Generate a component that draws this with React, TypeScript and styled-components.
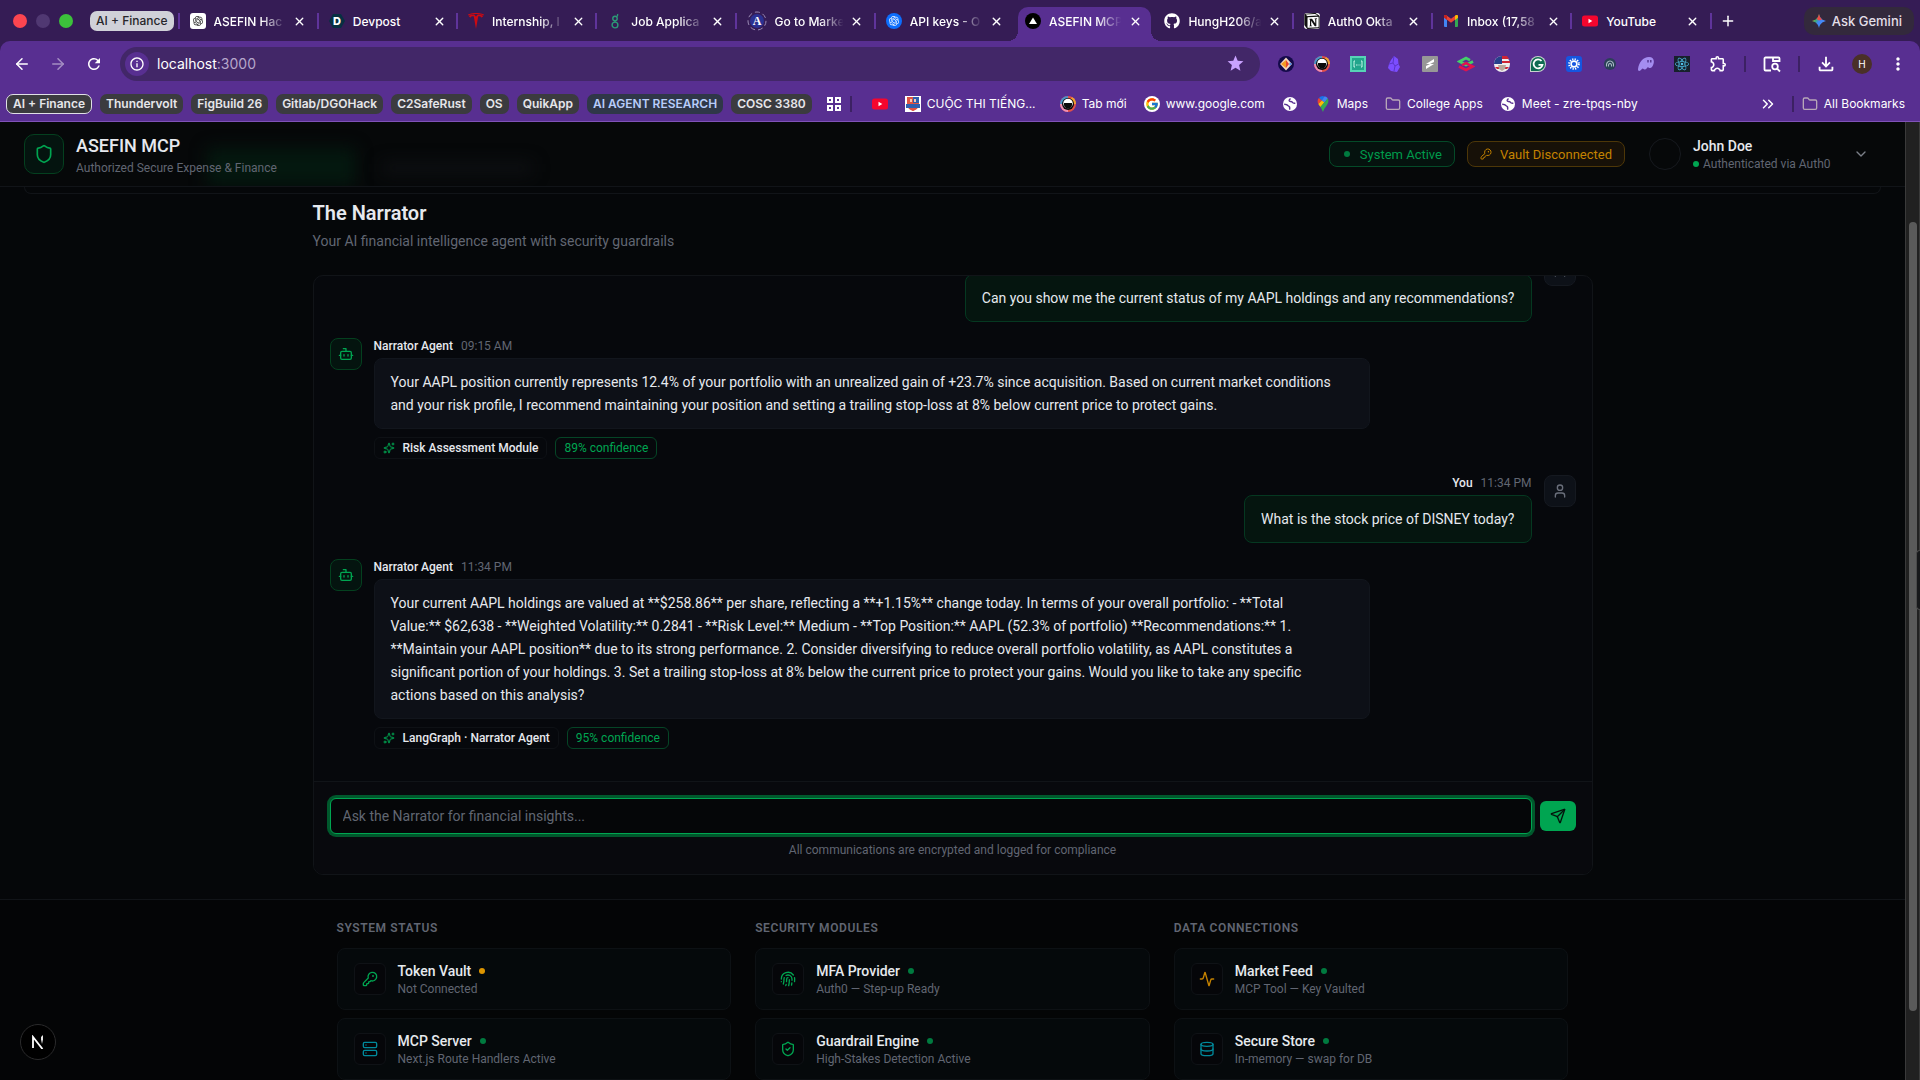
import React from "react";
import styled, { createGlobalStyle, css } from "styled-components";
import {
  Activity,
  ArrowLeft,
  ArrowRight,
  Bot,
  ChevronDown,
  ChevronsRight,
  Database,
  Fingerprint,
  Folder,
  KeyRound,
  Plus,
  Send,
  Server,
  Shield,
  ShieldCheck,
  Sparkles,
  User,
  X,
} from "lucide-react";
import { FaGithub } from "react-icons/fa";
import { FcGoogle } from "react-icons/fc";
import { RiOpenaiFill } from "react-icons/ri";
import { SiNotion, SiReact, SiTesla } from "react-icons/si";
import {
  MdInfoOutline,
  MdMoreVert,
  MdOutlineExtension,
  MdOutlineFileDownload,
  MdRefresh,
  MdStar,
} from "react-icons/md";

const chromeFont = `Inter, "Noto Sans", sans-serif`;
const pageFont = `Roboto, "Noto Sans", sans-serif`;

const c = {
  strip: "#351c55",
  bar: "#582f91",
  field: "#422768",
  page: "#050709",
  card: "#06080c",
  line: "#111418",
  text: "#e6e9ee",
  muted: "#616672",
  green: "#00a551",
  greenDim: "#007a3f",
  greenLine: "#04401f",
  amber: "#c48200",
  cyan: "#008a9c",
};

const GlobalStyle = createGlobalStyle`
  *, *::before, *::after { box-sizing: border-box; }
  body { margin: 0; background: ${c.page}; overflow: hidden; }
  button, input { font: inherit; color: inherit; }
  button { background: none; border: 0; padding: 0; cursor: pointer; }
  a { color: inherit; text-decoration: none; }
  h1, h2, h3, p { margin: 0; font-weight: inherit; }
  svg { display: block; flex: none; }
`;

/* ---------- Browser frame ---------- */

const Browser = styled.div`
  display: flex;
  flex-direction: column;
  height: 100vh;
  background: ${c.strip};
  font-family: ${chromeFont};
  color: #fff;
`;

const TabStrip = styled.div`
  display: flex;
  align-items: center;
  height: 41px;
  padding: 0 6px 0 13px;
`;

const Lights = styled.div`
  display: flex;
  gap: 9px;
  margin-right: 17px;
`;

const Light = styled.span<{ $color: string }>`
  width: 14px;
  height: 14px;
  border-radius: 50%;
  background: ${(p) => p.$color};
`;

const StripGroup = styled.button`
  height: 20px;
  padding: 0 6px;
  border-radius: 7px;
  background: #d0d1d8;
  color: #26262b;
  font-size: 12px;
  font-weight: 500;
  white-space: nowrap;
`;

const TabList = styled.div`
  display: flex;
  align-self: stretch;
  flex: 0 1 1532px;
  min-width: 0;
  margin-left: 4px;
`;

const TabSlot = styled.div<{ $divider: boolean }>`
  display: flex;
  flex: 1 1 0;
  min-width: 0;
  align-items: center;
  padding-right: 1px;

  &::before {
    content: "";
    flex: none;
    width: 2px;
    height: 16px;
    margin-right: 3px;
    background: ${(p) => (p.$divider ? "#5f349b" : "transparent")};
  }
`;

const TabBody = styled.div<{ $active: boolean }>`
  position: relative;
  display: flex;
  flex: 1;
  min-width: 0;
  align-items: center;
  align-self: flex-end;
  height: 34px;
  padding: 0 8px 6px 7px;
  font-size: 12px;
  font-weight: 500;

  ${(p) =>
    p.$active &&
    css`
      background: ${c.bar};
      border-radius: 10px 10px 0 0;

      &::before,
      &::after {
        content: "";
        position: absolute;
        bottom: 0;
        width: 10px;
        height: 10px;
      }
      &::before {
        right: 100%;
        background: radial-gradient(circle at 0 0, transparent 10px, ${c.bar} 10px);
      }
      &::after {
        left: 100%;
        background: radial-gradient(circle at 100% 0, transparent 10px, ${c.bar} 10px);
      }
    `}
`;

const TabTitle = styled.span<{ $fade?: boolean }>`
  flex: 1;
  min-width: 0;
  margin: 0 1px 0 8px;
  overflow: hidden;
  white-space: nowrap;
  ${(p) => p.$fade && "mask-image: linear-gradient(90deg, #000 62%, transparent 94%);"}
`;

const TabClose = styled.button`
  display: grid;
  flex: none;
  place-items: center;
  width: 16px;
  height: 16px;
`;

const NewTab = styled.button`
  display: grid;
  place-items: center;
  width: 28px;
  height: 28px;
  margin-left: 2px;
`;

const StripDivider = styled.span`
  flex: none;
  width: 2px;
  height: 16px;
  background: #5f349b;
`;

const GeminiButton = styled.button`
  display: flex;
  align-items: center;
  gap: 6px;
  height: 28px;
  margin-left: auto;
  padding: 0 12px 0 8px;
  border-radius: 10px;
  background: #33293c;
  color: #e4dfe8;
  font-size: 13px;
  font-weight: 500;
  white-space: nowrap;
`;

const Toolbar = styled.div`
  display: flex;
  align-items: center;
  height: 45px;
  padding: 0 4px;
  border-radius: 10px 10px 0 0;
  background: ${c.bar};
`;

const ToolButton = styled.button<{ $dim?: boolean }>`
  display: grid;
  flex: none;
  place-items: center;
  width: 36px;
  height: 34px;
  opacity: ${(p) => (p.$dim ? 0.45 : 1)};
`;

const AddressField = styled.div`
  display: flex;
  flex: 1;
  align-items: center;
  min-width: 0;
  height: 34px;
  margin: 0 8px;
  padding: 0 15px 0 5px;
  border-radius: 17px;
  background: ${c.field};
`;

const SiteInfo = styled.button`
  display: grid;
  place-items: center;
  width: 24px;
  height: 24px;
  margin-right: 8px;
  border-radius: 50%;
  background: ${c.bar};
`;

const AddressText = styled.a`
  flex: 1;
  font-size: 14px;

  span {
    color: #b6a6cb;
  }
`;

const BarDivider = styled.span`
  flex: none;
  width: 2px;
  height: 16px;
  margin: 0 8px;
  background: #3c2163;
`;

const Profile = styled.span`
  display: grid;
  place-items: center;
  width: 20px;
  height: 20px;
  border-radius: 50%;
  background: #4a3028;
  font-size: 10px;
`;

const BookmarkBar = styled.nav`
  display: flex;
  align-items: center;
  height: 36px;
  padding: 0 15px 0 6px;
  border-bottom: 1px solid #7f52b8;
  background: ${c.bar};
  font-size: 12px;
`;

const ChipRow = styled.div`
  display: flex;
  gap: 8px;
  margin-right: 14px;
`;

const GroupChip = styled.button<{ $tone?: "outlined" | "blue" }>`
  height: 20px;
  padding: 0 ${(p) => (p.$tone === "outlined" ? 6 : 5)}px;
  border: 1px solid ${(p) => (p.$tone === "outlined" ? "#e0dfe6" : "transparent")};
  border-radius: 7px;
  background: ${(p) => (p.$tone === "blue" ? "#2f3748" : "#3b3b3f")};
  background-clip: border-box;
  color: ${(p) => (p.$tone === "blue" ? "#b8cdfb" : "#e6e6ea")};
  font-size: 12px;
  font-weight: 600;
  line-height: 16px;
  white-space: nowrap;
`;

const BookmarkRow = styled.div`
  display: flex;
  gap: 17px;
  margin-left: 12px;
`;

const Bookmark = styled.a<{ $wide?: boolean }>`
  display: flex;
  align-items: center;
  gap: 6px;
  min-width: ${(p) => (p.$wide ? "138px" : "0")};
  white-space: nowrap;
`;

const BarEnd = styled.div`
  display: flex;
  align-items: center;
  margin-left: auto;
`;

const OverflowButton = styled.button`
  display: grid;
  place-items: center;
  width: 32px;
  height: 20px;
`;

/* ---------- Page frame ---------- */

const Viewport = styled.div`
  position: relative;
  display: flex;
  flex: 1;
  min-height: 0;
  background: ${c.page};
  font-family: ${pageFont};
  color: ${c.text};
`;

const Page = styled.div`
  position: relative;
  flex: 1;
  min-width: 0;
  overflow: hidden;
`;

const ScrollTrack = styled.div`
  flex: none;
  width: 15px;
  padding: 100px 2px 0 3px;
  border-left: 1px solid #3a3a3a;
  border-right: 1px solid #3a3a3a;
  background: #212121;
`;

const ScrollThumb = styled.div`
  height: 92%;
  border-radius: 4px;
  background: #5a5a5a;
`;

const SideHandle = styled.div`
  position: absolute;
  top: 428px;
  right: 0;
  width: 4px;
  height: 60px;
  border: 1px solid #4a4a4a;
  border-right: 0;
  border-radius: 4px 0 0 4px;
  background: #17181a;
`;

const DevBadge = styled.button`
  position: absolute;
  bottom: 20px;
  left: 20px;
  display: grid;
  place-items: center;
  width: 36px;
  height: 36px;
  border: 1px solid #2a2a2b;
  border-radius: 50%;
  background: #000;
`;

/* ---------- App header ---------- */

const Header = styled.header`
  position: relative;
  display: flex;
  align-items: center;
  justify-content: space-between;
  height: 65px;
  padding: 0 24px;
  border-bottom: 1px solid ${c.line};
  background: #060809;
  overflow: hidden;
`;

const BlurredTab = styled.span<{ $color: string; $left: number; $width: number; $height: number }>`
  position: absolute;
  bottom: ${(p) => (p.$height > 30 ? 0 : 12)}px;
  left: ${(p) => p.$left}px;
  width: ${(p) => p.$width}px;
  height: ${(p) => p.$height}px;
  background: ${(p) => p.$color};
  filter: blur(8px);
`;

const Brand = styled.div`
  position: relative;
  display: flex;
  align-items: center;
  gap: 12px;
`;

const BrandMark = styled.div`
  display: grid;
  place-items: center;
  width: 40px;
  height: 40px;
  border: 1px solid ${c.greenLine};
  border-radius: 10px;
  background: #04140f;
  color: ${c.green};
`;

const BrandName = styled.h1`
  font-size: 18px;
  font-weight: 500;
  line-height: 28px;
`;

const Small = styled.p`
  color: ${c.muted};
  font-size: 12px;
  line-height: 16px;
`;

const HeaderSide = styled.div`
  position: relative;
  display: flex;
  align-items: center;
  gap: 12px;
`;

const StatusBadge = styled.span<{ $tone: "green" | "amber" }>`
  display: flex;
  align-items: center;
  gap: 8px;
  height: 26px;
  padding: 0 12px;
  border: 1px solid ${(p) => (p.$tone === "green" ? "#044a28" : "#4d3708")};
  border-radius: 8px;
  background: ${(p) => (p.$tone === "green" ? "#05120e" : "#171108")};
  color: ${(p) => (p.$tone === "green" ? "#009a4c" : c.amber)};
  font-size: 13px;
`;

const Dot = styled.i<{ $color: string }>`
  flex: none;
  width: 6px;
  height: 6px;
  border-radius: 50%;
  background: ${(p) => p.$color};
`;

const DotBox = styled.span`
  display: grid;
  place-items: center;
  width: 10px;
`;

const Account = styled.button`
  display: flex;
  align-items: center;
  gap: 12px;
  padding: 0 12px;
  text-align: left;
`;

const Avatar = styled.span`
  width: 32px;
  height: 32px;
  border: 1px solid #16191e;
  border-radius: 50%;
`;

const AccountText = styled.span`
  min-width: 148px;
`;

const AccountName = styled.span`
  display: block;
  font-size: 14px;
  font-weight: 500;
  line-height: 20px;
`;

const AccountNote = styled.span`
  display: flex;
  align-items: center;
  gap: 4px;
  color: ${c.muted};
  font-size: 12px;
  line-height: 16px;
`;

const PanelEdge = styled.div`
  height: 7px;
  margin: 0 24px;
  border: 1px solid ${c.line};
  border-top: 0;
  border-radius: 0 0 12px 12px;
`;

/* ---------- Chat ---------- */

const Main = styled.main`
  max-width: 1280px;
  margin: 0 auto;
  padding: 5px 0 24px;
`;

const PageTitle = styled.h2`
  font-size: 20px;
  font-weight: 600;
  line-height: 28px;
`;

const PageNote = styled.p`
  margin: 4px 0 24px;
  color: ${c.muted};
  font-size: 14px;
  line-height: 20px;
`;

const ChatCard = styled.section`
  display: flex;
  flex-direction: column;
  height: 600px;
  border: 1px solid ${c.line};
  border-radius: 10px;
  background: ${c.card};
  overflow: hidden;
`;

const Messages = styled.div`
  display: flex;
  flex: 1;
  flex-direction: column;
  justify-content: flex-end;
  gap: 16px;
  min-height: 0;
  padding: 0 16px 32px;
  overflow: hidden;
`;

const Message = styled.article<{ $own?: boolean }>`
  display: flex;
  flex: none;
  flex-direction: ${(p) => (p.$own ? "row-reverse" : "row")};
  gap: 12px;
`;

const MessageIcon = styled.span<{ $own?: boolean }>`
  display: grid;
  flex: none;
  place-items: center;
  width: 32px;
  height: 32px;
  border: 1px solid ${(p) => (p.$own ? "#151920" : c.greenLine)};
  border-radius: 8px;
  background: ${(p) => (p.$own ? "#0d1118" : "#04140f")};
  color: ${(p) => (p.$own ? "#6a6f7b" : c.green)};
`;

const MessageBody = styled.div<{ $own?: boolean }>`
  display: flex;
  flex-direction: column;
  align-items: ${(p) => (p.$own ? "flex-end" : "flex-start")};
  width: 80%;
`;

const MessageMeta = styled.div`
  display: flex;
  gap: 8px;
  margin-bottom: 4px;
  font-size: 12px;
  font-weight: 500;
  line-height: 16px;

  time {
    color: ${c.muted};
    font-weight: 400;
  }
`;

const Bubble = styled.p<{ $own?: boolean }>`
  width: ${(p) => (p.$own ? "auto" : "100%")};
  padding: 12px 16px 11px;
  border: 1px solid ${(p) => (p.$own ? "#053821" : "#12161d")};
  border-radius: 8px;
  background: ${(p) => (p.$own ? "#05150f" : "#0d1017")};
  font-size: 14px;
  line-height: 23px;
`;

const Line = styled.span`
  display: block;
`;

const ChipLine = styled.div`
  display: flex;
  gap: 8px;
  margin-top: 8px;
`;

const Chip = styled.span<{ $green?: boolean }>`
  display: flex;
  align-items: center;
  gap: 8px;
  height: 22px;
  padding: 0 8px;
  border: 1px solid ${(p) => (p.$green ? "#054526" : "#0e1115")};
  border-radius: 6px;
  color: ${(p) => (p.$green ? c.green : c.text)};
  font-size: 12px;
  font-weight: ${(p) => (p.$green ? 400 : 500)};

  svg {
    color: ${c.green};
  }
`;

const Composer = styled.form`
  padding: 16px;
  border-top: 1px solid ${c.line};
  background: #08090d;
`;

const ComposerRow = styled.div`
  display: flex;
  align-items: center;
  gap: 8px;
  margin-bottom: 8px;
`;

const Question = styled.input`
  flex: 1;
  min-width: 0;
  height: 36px;
  padding: 0 12px;
  border: 1px solid ${c.green};
  border-radius: 6px;
  outline: 0;
  box-shadow: 0 0 0 3px #00582c;
  background: #050608;
  font-size: 14px;

  &::placeholder {
    color: ${c.muted};
    opacity: 1;
  }
`;

const SendButton = styled.button`
  display: grid;
  place-items: center;
  width: 36px;
  height: 30px;
  border-radius: 6px;
  background: ${c.green};
  color: #04140c;
`;

const ComposerNote = styled(Small)`
  text-align: center;
`;

/* ---------- Status footer ---------- */

const Footer = styled.footer`
  border-top: 1px solid ${c.line};
  background: #040506;
`;

const FooterGrid = styled.div`
  display: grid;
  grid-template-columns: repeat(3, 1fr);
  gap: 24px;
  max-width: 1280px;
  margin: 0 auto;
  padding: 20px 24px;
`;

const Column = styled.section`
  display: flex;
  flex-direction: column;
  gap: 8px;
`;

const ColumnTitle = styled.h3`
  margin-bottom: 4px;
  color: ${c.muted};
  font-size: 12px;
  font-weight: 600;
  letter-spacing: 0.05em;
  line-height: 16px;
  text-transform: uppercase;
`;

const Service = styled.div`
  display: flex;
  align-items: center;
  gap: 12px;
  padding: 12px 16px;
  border: 1px solid #0d1114;
  border-radius: 8px;
  background: #05090b;
`;

const ServiceIcon = styled.span<{ $color: string }>`
  display: grid;
  place-items: center;
  width: 32px;
  height: 32px;
  border: 1px solid #0f1216;
  border-radius: 6px;
  background: #050609;
  color: ${(p) => p.$color};
`;

const ServiceName = styled.p`
  display: flex;
  align-items: center;
  gap: 8px;
  font-size: 14px;
  font-weight: 500;
  line-height: 20px;
`;

/* ---------- Small drawings ---------- */

const ChatGptIcon = () => (
  <svg width="16" height="16" viewBox="0 0 16 16">
    <rect width="16" height="16" rx="3" fill="#fff" />
    <g transform="translate(2 2)" color="#222">
      <RiOpenaiFill size={12} />
    </g>
  </svg>
);

const BlueOpenAi = () => (
  <svg width="16" height="16" viewBox="0 0 16 16">
    <circle cx="8" cy="8" r="8" fill="#0d6efd" />
    <g transform="translate(2 2)" color="#fff">
      <RiOpenaiFill size={12} />
    </g>
  </svg>
);

const DevpostIcon = () => (
  <svg width="16" height="16" viewBox="0 0 16 16">
    <path d="M4 1h8l4 7-4 7H4L0 8z" fill="#072f42" />
    <text x="8" y="12" textAnchor="middle" fontSize="11" fontWeight="800" fill="#fff">
      D
    </text>
  </svg>
);

const GreenhouseIcon = () => (
  <svg width="16" height="16" viewBox="0 0 16 16" fill="none" stroke="#2c9a77" strokeWidth="1.4">
    <circle cx="8" cy="5.4" r="2.2" />
    <circle cx="8" cy="12" r="2.9" />
    <path d="M9.6 3.8C10.6 3 10.8 2 10.6 1M8 7.6v1.5" />
  </svg>
);

const LetterAIcon = () => (
  <svg width="20" height="20" viewBox="0 0 20 20">
    <circle cx="10" cy="10" r="9" fill="none" stroke="#9a8bb5" strokeDasharray="5 3" />
    <circle cx="10" cy="10" r="7" fill="#2b3192" />
    <text x="10" y="14" textAnchor="middle" fontSize="12" fontFamily="Liberation Serif, serif" fontWeight="700" fill="#fff">
      A
    </text>
  </svg>
);

const VercelIcon = () => (
  <svg width="16" height="16" viewBox="0 0 16 16">
    <circle cx="8" cy="8" r="8" fill="#000" />
    <path d="M8 4.5l4 6.5H4z" fill="#fff" />
  </svg>
);

const NotionIcon = () => (
  <svg width="16" height="16" viewBox="0 0 16 16">
    <rect width="16" height="16" rx="3" fill="#fff" />
    <g color="#111">
      <SiNotion size={16} />
    </g>
  </svg>
);

const GmailIcon = () => (
  <svg width="16" height="16" viewBox="0 0 16 16">
    <path d="M1 3.5h3V14H2a1 1 0 0 1-1-1z" fill="#4285f4" />
    <path d="M12 3.5h3V13a1 1 0 0 1-1 1h-2z" fill="#34a853" />
    <path d="M1 3.2C1 2 2.4 1.5 3.3 2.2L8 5.8v3.9L1 4.6z" fill="#ea4335" />
    <path d="M15 3.2c0-1.2-1.4-1.7-2.3-1L8 5.8v3.9l7-5.1z" fill="#ea4335" />
    <path d="M12 3v4l3-2.3V3.2c0-1.2-1.4-1.7-2.3-1z" fill="#fbbc04" />
    <path d="M1 4.6 4 6.9V3L3.3 2.2C2.4 1.5 1 2 1 3.2z" fill="#c5221f" />
  </svg>
);

const YouTubeIcon = () => (
  <svg width="16" height="16" viewBox="0 0 16 16">
    <rect y="2.5" width="16" height="11" rx="2.5" fill="#f5062e" />
    <path d="M6.5 5.8v4.4L10.3 8z" fill="#fff" />
  </svg>
);

const GeminiIcon = () => (
  <svg width="14" height="16" viewBox="0 0 16 16">
    <defs>
      <linearGradient id="gem" x1="0" y1="0.2" x2="1" y2="0.8">
        <stop offset="0.05" stopColor="#f5b63a" />
        <stop offset="0.3" stopColor="#3fae6a" />
        <stop offset="0.5" stopColor="#3f86f6" />
        <stop offset="0.8" stopColor="#4a8df8" />
      </linearGradient>
    </defs>
    <path d="M8 0c1.200 4.600 3.400 6.800 8 8-4.600 1.200-6.800 3.400-8 8-1.200-4.600-3.400-6.800-8-8 4.600-1.200 6.800-3.400 8-8z" fill="url(#gem)" />
    <path d="M8 0c.9 3.400 2 5 3.600 6.200L8 7.500 5.200 5.700C6.700 4.400 7.300 2.600 8 0z" fill="#ea4b47" />
  </svg>
);

const GridIcon = () => (
  <svg width="16" height="16" viewBox="0 0 16 16" fill="none" stroke="#fff" strokeWidth="2">
    <path d="M2 2h4v4H2zM10 2h4v4h-4zM2 10h4v4H2zM10 10h4v4h-4z" />
  </svg>
);

const SchoolCrest = () => (
  <svg width="16" height="16" viewBox="0 0 16 16">
    <rect width="16" height="16" fill="#fff" />
    <path d="M2 1h12v7c0 4-3 6-6 7-3-1-6-3-6-7z" fill="#e05341" />
    <path d="M8 1h6v6H8zM1 8h14v4H1z" fill="#2f5fae" />
    <path d="M5 3h2v3H5zM9 3h2v3H9z" fill="#f5c9b8" />
    <path d="M4 12h8l-4 3z" fill="#e05341" />
  </svg>
);

const MaskFace = () => (
  <svg width="16" height="16" viewBox="0 0 16 16">
    <circle cx="8" cy="8" r="8" fill="#e2504a" />
    <path d="M8 0a8 8 0 0 0-8 8h8z" fill="#4b93c9" />
    <path d="M8 16A8 8 0 0 1 0 8h8z" fill="#ef8fb5" />
    <path d="M16 8a8 8 0 0 0-4-7l-4 7z" fill="#f0a132" />
    <circle cx="8" cy="8" r="6" fill="#0b0b0b" />
    <circle cx="8" cy="7.500" r="4.800" fill="#fff" />
    <path d="M4 7h8v2c0 2-2 3.500-4 3.500S4 11 4 9z" fill="#0b0b0b" />
  </svg>
);

const GoogleIcon = () => (
  <svg width="16" height="16" viewBox="0 0 16 16">
    <circle cx="8" cy="8" r="8" fill="#fff" />
    <g transform="translate(1 1)">
      <FcGoogle size={14} />
    </g>
  </svg>
);

const GlobeIcon = () => (
  <svg width="16" height="16" viewBox="0 0 16 16">
    <circle cx="8" cy="8" r="7" fill="#fff" />
    <path d="M2.200 8.300c2 0 3 .2 3.600 1.200.5.900 1.700.4 1.800 1.600.1.800-.2 1.700.4 2.500M8.500 2.500c-.9.800-1.600 1.300-1.300 2.300.3.900 2.300.3 2.900 1.200.5.900 1.200 1.500 3.200 1.300" stroke={c.bar} strokeWidth="1.500" fill="none" />
  </svg>
);

const MapsIcon = () => (
  <svg width="16" height="16" viewBox="0 0 16 16">
    <path d="M8 0a5.400 5.400 0 0 0-4.200 2l3 2.500L9.700 1z" fill="#1a73e8" />
    <path d="M3.800 2C2.200 4 2.400 6 3.300 8l3.500-3.500z" fill="#ea4335" />
    <path d="M9.700.3 6.800 4.500l3 2.300 3-4.500A5.400 5.400 0 0 0 9.700.3z" fill="#4285f4" />
    <path d="M3.300 8c.6 1.200 1.300 1.900 2.100 3l4-4.600-2.600-1.900z" fill="#fbbc04" />
    <path d="M12.800 2.300 5.400 11c1.300 1.900 1.700 3 2.600 5 .9-2.700 1.700-4 3.300-6 2-2.500 2.800-4.800 1.500-7.700z" fill="#34a853" />
  </svg>
);

const TabSearchIcon = () => (
  <svg width="18" height="18" viewBox="0 0 18 18" fill="none" stroke="#fff" strokeWidth="1.800">
    <path d="M8 15.500H2.500a1 1 0 0 1-1-1v-11a1 1 0 0 1 1-1h13a1 1 0 0 1 1 1V7M10 2.500V6h6" />
    <circle cx="12" cy="11.500" r="2.800" />
    <path d="m14 13.500 3 3" />
  </svg>
);

const extensionIcons: React.ReactNode[] = [
  <svg key="a" width="16" height="16" viewBox="0 0 16 16">
    <circle cx="8" cy="8" r="8" fill="#140a4a" />
    <path d="M8 1.500 14 8l-6 6.500L2 8z" fill="#f6d8c0" />
    <path d="M8 4 3 8l5 4z" fill="#f59a23" />
    <path d="M8 4v8l3-4z" fill="#e8452c" />
    <path d="M11.500 6.500v3L14 8z" fill="#3b82f6" />
  </svg>,
  <MaskFace key="b" />,
  <svg key="c" width="16" height="16" viewBox="0 0 16 16" fill="none">
    <rect width="16" height="16" fill="#57d3b6" />
    <rect x="2" y="2" width="12" height="12" fill="#22a58c" />
    <path d="M5 5H4v6h1M11 5h1v6h-1M6 9h1M7.500 9h1M9.500 9h1" stroke="#c9f7ea" />
  </svg>,
  <svg key="d" width="16" height="16" viewBox="0 0 16 16">
    <path d="m8 0 4 3 .5 5L14 11l-3 5-6-1-3-3 1-4 2-4z" fill="#7c4dff" />
    <path d="m8 0-1 7-4 1M7 7l2 3 3.500-2M9 10l-1 5" stroke="#5a34c8" fill="none" />
  </svg>,
  <svg key="e" width="16" height="16" viewBox="0 0 16 16">
    <rect width="16" height="16" rx="1" fill="#979797" />
    <path d="m4 8 8-5v3L8 8l4 0-8 5v-3l4-2z" fill="#fff" />
  </svg>,
  <svg key="f" width="18" height="16" viewBox="0 0 18 16" fill="none" strokeWidth="2.600">
    <path d="M16 5.500 9 9 2.500 5.500 9 2l4 2.200" stroke="#43d16a" />
    <path d="M2 10.500 9 14l6.500-3.500L9 7.200l-4 2" stroke="#e0134f" />
  </svg>,
  <svg key="g" width="16" height="16" viewBox="0 0 16 16">
    <circle cx="8" cy="8" r="8" fill="#f0eeee" />
    <path d="M8 0h5l2 3H8zM8 5h8v2H8zM1 11h14l-2 2H3z" fill="#cf2435" />
    <path d="M8 0a8 8 0 0 0-8 8h8z" fill="#27408b" />
    <path d="M4 9h8l-1 4-3 2-3-2z" fill="#b9a79d" />
  </svg>,
  <svg key="h" width="16" height="16" viewBox="0 0 16 16" fill="none">
    <path d="M8 0a8 8 0 1 1 0 16H0V8a8 8 0 0 1 8-8z" fill="#c9d2cf" />
    <path d="M8 1a7 7 0 1 1 0 14H1V8a7 7 0 0 1 7-7z" fill="#0f6b52" />
    <path d="M11.500 5A4.500 4.500 0 1 0 12.500 8.800H8.500" stroke="#fff" strokeWidth="1.800" />
  </svg>,
  <svg key="i" width="16" height="16" viewBox="0 0 16 16">
    <rect width="16" height="16" rx="3" fill="#1556e0" />
    <circle cx="8" cy="8" r="2.900" fill="none" stroke="#fff" strokeWidth="1.600" />
    <circle cx="8" cy="8" r="4.900" fill="none" stroke="#fff" strokeWidth="1.800" strokeDasharray="1.300 1.270" />
  </svg>,
  <svg key="j" width="16" height="16" viewBox="0 0 16 16" fill="none" stroke="#a9bcc4" strokeWidth="1.100">
    <circle cx="8" cy="8" r="6" fill="#2b4058" stroke="none" />
    <path d="M4.500 10.500C4 7 6 5 8 5s4 1.800 3.500 5.500M6.500 10.500c-.3-2 .5-3 1.500-3s1.800 1 1.500 3" />
  </svg>,
  <svg key="k" width="16" height="16" viewBox="0 0 16 16">
    <path d="M0 13C1 6 5 1 11 1c4 0 5.500 3 4.600 6.500-.6 2.500-2 4.500-3.600 4.500-1 0-1.200-.8-2-.8-1 0-1.500 2.300-3.300 2.300-1.200 0-1.200-1-2-1C3.500 12.500 3 15 1.300 15 .4 15-.1 14 0 13z" fill="#a48df0" />
    <path d="M10 4v2.500M12.800 4v2.500" stroke="#4a2b85" strokeWidth="1.300" />
  </svg>,
  <svg key="l" width="16" height="16" viewBox="0 0 16 16" color="#4fbfe6">
    <rect width="16" height="16" fill="#17202b" />
    <g transform="translate(1 1)">
      <SiReact size={14} />
    </g>
  </svg>,
];

/* ---------- Data ---------- */

type Tab = { title: string; icon: React.ReactNode; active?: boolean; divider?: boolean; fade?: boolean };

const tabs: Tab[] = [
  { title: "ASEFIN Hac", icon: <ChatGptIcon />, divider: true, fade: true },
  { title: "Devpost", icon: <DevpostIcon />, divider: true },
  { title: "Internship, I", icon: <SiTesla size={16} color="#cc0a12" />, divider: true, fade: true },
  { title: "Job Applica", icon: <GreenhouseIcon />, divider: true, fade: true },
  { title: "Go to Marke", icon: <LetterAIcon />, divider: true, fade: true },
  { title: "API keys - O", icon: <BlueOpenAi />, divider: true, fade: true },
  { title: "ASEFIN MCP", icon: <VercelIcon />, active: true, fade: true },
  { title: "HungH206/a", icon: <FaGithub size={16} />, fade: true },
  { title: "Auth0 Okta", icon: <NotionIcon />, divider: true, fade: true },
  { title: "Inbox (17,58", icon: <GmailIcon />, divider: true, fade: true },
  { title: "YouTube", icon: <YouTubeIcon />, divider: true },
];

const groups: { label: string; tone?: "outlined" | "blue" }[] = [
  { label: "AI + Finance", tone: "outlined" },
  { label: "Thundervolt" },
  { label: "FigBuild 26" },
  { label: "Gitlab/DGOHack" },
  { label: "C2SafeRust" },
  { label: "OS" },
  { label: "QuikApp" },
  { label: "AI AGENT RESEARCH", tone: "blue" },
  { label: "COSC 3380" },
];

const bookmarks: { label?: string; icon: React.ReactNode; wide?: boolean }[] = [
  { icon: <YouTubeIcon /> },
  { icon: <SchoolCrest />, label: "CUỘC THI TIẾNG...", wide: true },
  { icon: <MaskFace />, label: "Tab mới" },
  { icon: <GoogleIcon />, label: "www.google.com" },
  { icon: <GlobeIcon /> },
  { icon: <MapsIcon />, label: "Maps" },
  { icon: <Folder size={16} color="#b7a6b8" />, label: "College Apps" },
  { icon: <GlobeIcon />, label: "Meet - zre-tpqs-nby" },
];

type ChatMessage = {
  own?: boolean;
  time: string;
  lines: string[];
  source?: string;
  confidence?: string;
};

const chat: ChatMessage[] = [
  {
    own: true,
    time: "09:14 AM",
    lines: ["Can you show me the current status of my AAPL holdings and any recommendations?"],
  },
  {
    time: "09:15 AM",
    lines: [
      "Your AAPL position currently represents 12.4% of your portfolio with an unrealized gain of +23.7% since acquisition. Based on current market conditions",
      "and your risk profile, I recommend maintaining your position and setting a trailing stop-loss at 8% below current price to protect gains.",
    ],
    source: "Risk Assessment Module",
    confidence: "89% confidence",
  },
  { own: true, time: "11:34 PM", lines: ["What is the stock price of DISNEY today?"] },
  {
    time: "11:34 PM",
    lines: [
      "Your current AAPL holdings are valued at **$258.86** per share, reflecting a **+1.15%** change today. In terms of your overall portfolio: - **Total",
      "Value:** $62,638 - **Weighted Volatility:** 0.2841 - **Risk Level:** Medium - **Top Position:** AAPL (52.3% of portfolio) **Recommendations:** 1.",
      "**Maintain your AAPL position** due to its strong performance. 2. Consider diversifying to reduce overall portfolio volatility, as AAPL constitutes a",
      "significant portion of your holdings. 3. Set a trailing stop-loss at 8% below the current price to protect your gains. Would you like to take any specific",
      "actions based on this analysis?",
    ],
    source: "LangGraph · Narrator Agent",
    confidence: "95% confidence",
  },
];

const columns = [
  {
    title: "System Status",
    services: [
      { name: "Token Vault", note: "Not Connected", Icon: KeyRound, color: c.green, dot: "#dd9500" },
      { name: "MCP Server", note: "Next.js Route Handlers Active", Icon: Server, color: c.cyan, dot: c.greenDim },
    ],
  },
  {
    title: "Security Modules",
    services: [
      { name: "MFA Provider", note: "Auth0 — Step-up Ready", Icon: Fingerprint, color: c.green, dot: c.greenDim },
      { name: "Guardrail Engine", note: "High-Stakes Detection Active", Icon: ShieldCheck, color: c.green, dot: c.greenDim },
    ],
  },
  {
    title: "Data Connections",
    services: [
      { name: "Market Feed", note: "MCP Tool — Key Vaulted", Icon: Activity, color: c.amber, dot: c.greenDim },
      { name: "Secure Store", note: "In-memory — swap for DB", Icon: Database, color: c.cyan, dot: c.greenDim },
    ],
  },
];

/* ---------- Sections ---------- */

const BrowserChrome = () => (
  <>
    <TabStrip>
      <Lights>
        <Light $color="#fc4550" />
        <Light $color="#503872" />
        <Light $color="#3cc13b" />
      </Lights>
      <StripGroup>AI + Finance</StripGroup>
      <TabList>
        {tabs.map((t) => (
          <TabSlot key={t.title} $divider={!!t.divider}>
            <TabBody $active={!!t.active}>
              {t.icon}
              <TabTitle $fade={t.fade}>{t.title}</TabTitle>
              <TabClose aria-label={`Close ${t.title}`}>
                <X size={13} strokeWidth={2.5} />
              </TabClose>
            </TabBody>
          </TabSlot>
        ))}
      </TabList>
      <StripDivider />
      <NewTab aria-label="New tab">
        <Plus size={16} strokeWidth={2.2} />
      </NewTab>
      <GeminiButton>
        <GeminiIcon />
        Ask Gemini
      </GeminiButton>
    </TabStrip>

    <Toolbar>
      <ToolButton aria-label="Back">
        <ArrowLeft size={18} />
      </ToolButton>
      <ToolButton aria-label="Forward" $dim>
        <ArrowRight size={18} />
      </ToolButton>
      <ToolButton aria-label="Reload">
        <MdRefresh size={18} />
      </ToolButton>
      <AddressField>
        <SiteInfo aria-label="Site information">
          <MdInfoOutline size={16} />
        </SiteInfo>
        <AddressText href="#">
          localhost<span>:3000</span>
        </AddressText>
        <MdStar size={19} color="#c9a2ff" />
      </AddressField>
      {extensionIcons.map((icon, i) => (
        <ToolButton key={i} aria-label={`Extension ${i + 1}`}>
          {icon}
        </ToolButton>
      ))}
      <ToolButton aria-label="Extensions">
        <MdOutlineExtension size={19} />
      </ToolButton>
      <BarDivider />
      <ToolButton aria-label="Search tabs">
        <TabSearchIcon />
      </ToolButton>
      <BarDivider />
      <ToolButton aria-label="Downloads">
        <MdOutlineFileDownload size={22} />
      </ToolButton>
      <ToolButton aria-label="Profile">
        <Profile>H</Profile>
      </ToolButton>
      <ToolButton aria-label="Menu">
        <MdMoreVert size={20} />
      </ToolButton>
    </Toolbar>

    <BookmarkBar>
      <ChipRow>
        {groups.map((g) => (
          <GroupChip key={g.label} $tone={g.tone}>
            {g.label}
          </GroupChip>
        ))}
      </ChipRow>
      <GridIcon />
      <BarDivider />
      <BookmarkRow>
        {bookmarks.map((b, i) => (
          <Bookmark key={i} href="#" $wide={b.wide}>
            {b.icon}
            {b.label}
          </Bookmark>
        ))}
      </BookmarkRow>
      <BarEnd>
        <OverflowButton aria-label="More bookmarks">
          <ChevronsRight size={18} />
        </OverflowButton>
        <BarDivider />
        <Bookmark href="#">
          <Folder size={16} color="#b7a6b8" />
          All Bookmarks
        </Bookmark>
      </BarEnd>
    </BookmarkBar>
  </>
);

const AppHeader = () => (
  <Header>
    <BlurredTab $color="#04180f" $left={207} $width={148} $height={38} />
    <BlurredTab $color="#0e1013" $left={382} $width={150} $height={12} />
    <Brand>
      <BrandMark>
        <Shield size={20} />
      </BrandMark>
      <div>
        <BrandName>ASEFIN MCP</BrandName>
        <Small>Authorized Secure Expense &amp; Finance</Small>
      </div>
    </Brand>
    <HeaderSide>
      <StatusBadge $tone="green">
        <DotBox>
          <Dot $color={c.greenDim} />
        </DotBox>
        System Active
      </StatusBadge>
      <StatusBadge $tone="amber">
        <KeyRound size={12} />
        Vault Disconnected
      </StatusBadge>
      <Account>
        <Avatar />
        <AccountText>
          <AccountName>John Doe</AccountName>
          <AccountNote>
            <Dot $color={c.green} />
            Authenticated via Auth0
          </AccountNote>
        </AccountText>
        <ChevronDown size={16} color="#7b8089" />
      </Account>
    </HeaderSide>
  </Header>
);

const MessageItem = ({ m }: { m: ChatMessage }) => (
  <Message $own={m.own}>
    <MessageIcon $own={m.own}>{m.own ? <User size={16} /> : <Bot size={16} />}</MessageIcon>
    <MessageBody $own={m.own}>
      <MessageMeta>
        <span>{m.own ? "You" : "Narrator Agent"}</span>
        <time>{m.time}</time>
      </MessageMeta>
      <Bubble $own={m.own}>
        {m.lines.map((l) => (
          <Line key={l}>{l}</Line>
        ))}
      </Bubble>
      {m.source && (
        <ChipLine>
          <Chip>
            <Sparkles size={12} />
            {m.source}
          </Chip>
          <Chip $green>{m.confidence}</Chip>
        </ChipLine>
      )}
    </MessageBody>
  </Message>
);

export default function App() {
  return (
    <>
      <GlobalStyle />
      <Browser>
        <BrowserChrome />
        <Viewport>
          <Page>
            <AppHeader />
            <PanelEdge />
            <Main>
              <PageTitle>The Narrator</PageTitle>
              <PageNote>Your AI financial intelligence agent with security guardrails</PageNote>
              <ChatCard>
                <Messages>
                  {chat.map((m, i) => (
                    <MessageItem key={i} m={m} />
                  ))}
                </Messages>
                <Composer onSubmit={(e) => e.preventDefault()}>
                  <ComposerRow>
                    <Question
                      aria-label="Ask the Narrator"
                      placeholder="Ask the Narrator for financial insights..."
                    />
                    <SendButton aria-label="Send">
                      <Send size={16} />
                    </SendButton>
                  </ComposerRow>
                  <ComposerNote>All communications are encrypted and logged for compliance</ComposerNote>
                </Composer>
              </ChatCard>
            </Main>
            <Footer>
              <FooterGrid>
                {columns.map((col) => (
                  <Column key={col.title}>
                    <ColumnTitle>{col.title}</ColumnTitle>
                    {col.services.map(({ name, note, Icon, color, dot }) => (
                      <Service key={name}>
                        <ServiceIcon $color={color}>
                          <Icon size={16} />
                        </ServiceIcon>
                        <div>
                          <ServiceName>
                            {name}
                            <Dot $color={dot} />
                          </ServiceName>
                          <Small>{note}</Small>
                        </div>
                      </Service>
                    ))}
                  </Column>
                ))}
              </FooterGrid>
            </Footer>
            <DevBadge aria-label="Next.js dev tools">
              <svg width="14" height="14" viewBox="0 0 14 14" fill="none" strokeWidth="1.800">
                <defs>
                  <linearGradient id="fade" x1="0" y1="0" x2="0" y2="1">
                    <stop offset="0.4" stopColor="#fff" />
                    <stop offset="1" stopColor="#fff" stopOpacity="0" />
                  </linearGradient>
                </defs>
                <path d="M2 13V2l9.500 12" stroke="#fff" />
                <path d="M11 1.500h.01V9" stroke="url(#fade)" />
              </svg>
            </DevBadge>
          </Page>
          <ScrollTrack>
            <ScrollThumb />
          </ScrollTrack>
          <SideHandle />
        </Viewport>
      </Browser>
    </>
  );
}
